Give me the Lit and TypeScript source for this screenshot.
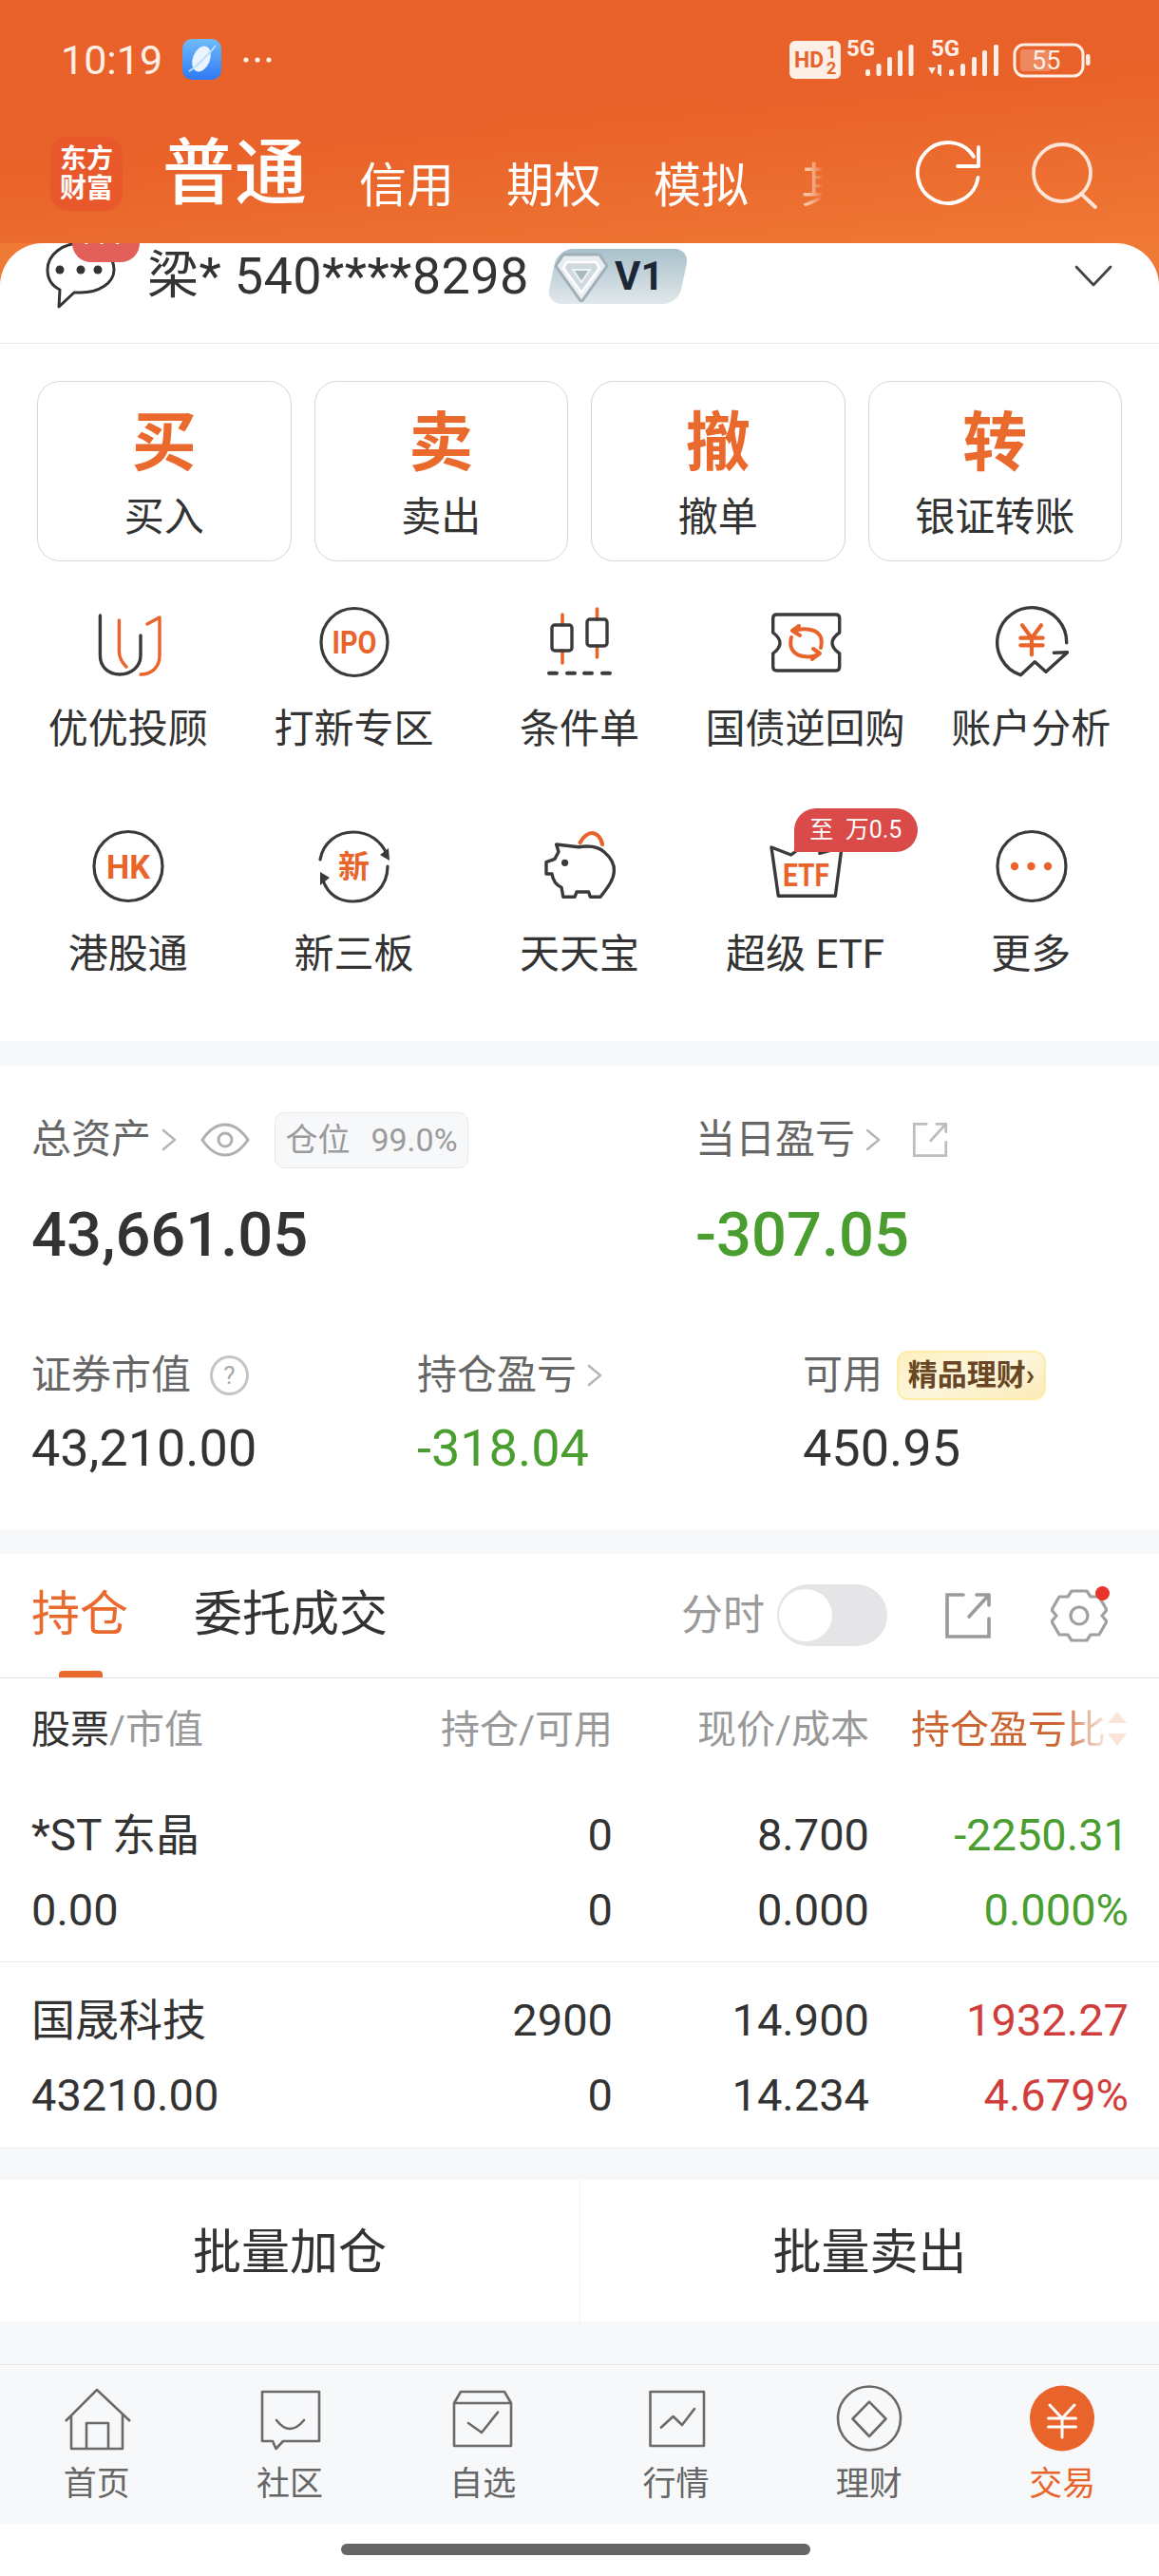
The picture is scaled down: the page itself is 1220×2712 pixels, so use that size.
import { LitElement, html, css } from "lit";
import { customElement } from "lit/decorators.js";

const D = "#3a3a3a";
const O = "#e9642b";

const gridIcons = [
  {
    label: "优优投顾",
    art: html`<svg class="ic" viewBox="0 0 80 80" fill="none" stroke-linecap="round" stroke-linejoin="round" stroke-width="3.4">
      <path stroke=${D} d="M10.4 12V54C10.4 66 19 74 31 74S53 66 53 54V33" />
      <path stroke=${O} d="M30.4 17V50C30.4 56 33 61 38 66" />
      <path stroke=${O} d="M60 21L73 14V54C73 66 65 74 53 74" />
    </svg>`,
  },
  {
    label: "打新专区",
    art: html`<svg class="ic" viewBox="0 0 80 80" fill="none">
      <ellipse cx="41" cy="40" rx="35" ry="35.5" stroke=${D} stroke-width="3.2" />
      <text x="17.5" y="52" class="ict" font-size="34" fill=${O} textLength="47" lengthAdjust="spacingAndGlyphs">IPO</text>
    </svg>`,
  },
  {
    label: "条件单",
    art: html`<svg class="ic" viewBox="0 0 80 80" fill="none" stroke-width="3.4" stroke-linecap="round" stroke-linejoin="round">
      <path stroke=${O} d="M22 11V22M22 49V62M58.5 5V16M58.5 44V56" stroke-width="3.6" />
      <rect x="11" y="22" width="21" height="27" rx="3" stroke=${D} />
      <rect x="48" y="16" width="21" height="28" rx="3" stroke=${D} />
      <path stroke=${D} d="M8 72.7H16M27 72.7H35M45 72.7H53M64 72.7H72" stroke-width="4" />
    </svg>`,
  },
  {
    label: "国债逆回购",
    art: html`<svg class="ic" viewBox="0 0 80 80" fill="none" stroke-width="3.4" stroke-linecap="round" stroke-linejoin="round">
      <path stroke=${D} d="M9.5 11H72Q75.7 11 75.7 15V30C70 34 68 38 68 41S70 48 75.7 52V66Q75.7 70 72 70H9.5Q5.7 70 5.7 66V52C11 48 13 44 13 41S11 34 5.7 30V15Q5.7 11 9.5 11Z" />
      <path stroke=${O} stroke-width="4" d="M28 29C34 25 50 25 55 33C58 38 57 42 56 46M33 23L26 28L34 33" />
      <path stroke=${O} stroke-width="4" d="M54 52C48 57 31 57 26 48C23 43 24 39 25 35M48 47L55 52L47 58" />
    </svg>`,
  },
  {
    label: "账户分析",
    art: html`<svg class="ic" viewBox="0 0 80 80" fill="none" stroke-width="3.4" stroke-linecap="round" stroke-linejoin="round">
      <path stroke=${D} d="M77.7 40.7A36.5 36.5 0 1 0 29.3 74.7L44.3 60.7L56 71.3L78.7 50.7L64.3 51.3" />
      <path stroke=${O} stroke-width="4.2" d="M31 22.3L41 35.7L51 22.3M29.3 35.7H52.7M29.3 43.3H52.7M41 35.7V53.3" />
    </svg>`,
  },
  {
    label: "港股通",
    art: html`<svg class="ic" viewBox="0 0 80 80" fill="none">
      <ellipse cx="40" cy="39" rx="36" ry="36.5" stroke=${D} stroke-width="3.2" />
      <text x="17" y="52" class="ict" font-size="35" fill=${O} textLength="46" lengthAdjust="spacingAndGlyphs">HK</text>
    </svg>`,
  },
  {
    label: "新三板",
    art: html`<svg class="ic" viewBox="0 0 80 80" fill="none" stroke-linecap="round" stroke-linejoin="round">
      <path stroke=${D} stroke-width="3.2" d="M5 32C8 14 23 3 40 3C56 3 69 12 75 26" />
      <path fill=${D} d="M77 20L78 33L68 27Z" />
      <path stroke=${D} stroke-width="3.2" d="M76 39C76 60 60 76 40 76C26 76 14 70 8 54" />
      <path fill=${D} d="M5 59L5 45L15 51Z" />
      <text x="24" y="51" class="ict" font-size="33" fill=${O}>新</text>
    </svg>`,
  },
  {
    label: "天天宝",
    art: html`<svg class="ic" viewBox="0 0 80 80" fill="none" stroke-width="3.4" stroke-linecap="round" stroke-linejoin="round">
      <path stroke=${O} stroke-width="4.2" d="M40.6 14C44 7 50 4 53 4C58 4 63 9 64 16" />
      <path stroke=${D} d="M15.6 16L38.9 18.7C50 17 60 18 66 24C73 30 77 36 76.4 44C76 54 69 62 62 71.3H51.4L49.6 66H37L35 71.3H22.8L21 61.3C16 59 12 54 11 47H5V34.7L14 31.3L18 23.7Z" />
      <circle cx="24.6" cy="35.3" r="3.6" fill=${D} stroke="none" />
    </svg>`,
  },
  {
    label: "超级 ETF",
    badge: true,
    art: html`<svg class="ic" viewBox="0 0 80 80" fill="none" stroke-width="3.4" stroke-linecap="round" stroke-linejoin="round">
      <path stroke=${D} d="M54.7 25.3L78 19L71.3 70.3H11.3L4 19L24.7 27L34 20" />
      <text x="16" y="60" class="ict" font-size="34" fill=${O} textLength="49" lengthAdjust="spacingAndGlyphs">ETF</text>
    </svg>`,
  },
  {
    label: "更多",
    art: html`<svg class="ic" viewBox="0 0 80 80" fill="none">
      <ellipse cx="41" cy="39" rx="36" ry="36.5" stroke=${D} stroke-width="3.2" />
      <circle cx="23" cy="39" r="4.2" fill=${O} /><circle cx="40.5" cy="39" r="4.2" fill=${O} /><circle cx="58" cy="39" r="4.2" fill=${O} />
    </svg>`,
  },
];

const G = "#6a6a6a";
const navTabs = [
  {
    label: "首页",
    art: html`<svg class="nic" viewBox="0 0 80 72" fill="none" stroke=${G} stroke-width="2.6" stroke-linejoin="round">
      <path d="M7 39L40 6L75 39M13 32V68H67V32M29 68V41H52V68" />
    </svg>`,
  },
  {
    label: "社区",
    art: html`<svg class="nic" viewBox="0 0 80 72" fill="none" stroke=${G} stroke-width="2.6" stroke-linejoin="round" stroke-linecap="round">
      <path d="M11 8H71V60H33L25.5 68L22 60H11Z" /><path d="M26 38Q40 56 55 38" />
    </svg>`,
  },
  {
    label: "自选",
    art: html`<svg class="nic" viewBox="0 0 80 72" fill="none" stroke=${G} stroke-width="2.6" stroke-linejoin="round" stroke-linecap="round">
      <path d="M10 20L17 8H63L70 20V65H10ZM10 20H70" /><path d="M25 41L39 51L56 29.6" />
    </svg>`,
  },
  {
    label: "行情",
    art: html`<svg class="nic" viewBox="0 0 80 72" fill="none" stroke=${G} stroke-width="2.6" stroke-linejoin="round" stroke-linecap="round">
      <rect x="12.5" y="8" width="56.5" height="57" /><path d="M24 45.5L36.6 34L46 43L59 26" />
    </svg>`,
  },
  {
    label: "理财",
    art: html`<svg class="nic" viewBox="0 0 80 72" fill="none" stroke=${G} stroke-width="2.6" stroke-linejoin="round">
      <ellipse cx="40" cy="36" rx="33" ry="33.5" /><path d="M40 18.6L57.5 36.5L40 55L22.5 36.5Z" />
    </svg>`,
  },
  {
    label: "交易",
    active: true,
    art: html`<svg class="nic" viewBox="0 0 80 72" fill="none">
      <ellipse cx="40" cy="36" rx="34" ry="34.5" fill=${O} />
      <path stroke="#fff" stroke-width="3" stroke-linecap="round" stroke-linejoin="round" d="M27 22L40 36L53 22M25.5 36H54.5M25.5 45H54.5M40 36V56" />
    </svg>`,
  },
];

const chevron = html`<svg class="chev" viewBox="0 0 18 24" fill="none" stroke="#b5b5b5" stroke-width="2.4" stroke-linecap="round" stroke-linejoin="round"><path d="M3 2L15 12L3 22" /></svg>`;
const linkIcon = (cls: string, color: string) => html`<svg class=${cls} viewBox="0 0 50 50" fill="none" stroke=${color} stroke-width="3.6" stroke-linecap="round"><path d="M20 3H3V47H47V28" /><path d="M26 26L47 3M34 3H47V14" stroke-linejoin="round" /></svg>`;

@customElement("app-root")
export class AppRoot extends LitElement {
  static styles = css`
    :host {
      display: block;
      width: 1220px;
      height: 2712px;
      background: #fff;
      overflow: hidden;
      font-family: Roboto, "Noto Sans CJK SC", sans-serif;
      color: #333;
    }
    .ict { font-weight: 700; font-family: Roboto, "Noto Sans CJK SC", sans-serif; }
    .top {
      background: #ef7a35 linear-gradient(175deg, #e9612a 0%, #e9622a 50%, #ef7935 100%) no-repeat;
      background-size: 100% 256px;
    }
    .status {
      height: 46px;
      padding: 40px 70px 0 64px;
      display: flex;
      align-items: center;
      color: #fdeee6;
    }
    .time { font-size: 43px; line-height: 46px; width: 128px; }
    .appdot { width: 42px; height: 44px; }
    .dots { width: 34px; height: 10px; margin-left: 21px; }
    .sysicons { width: 319px; height: 46px; margin-left: auto; overflow: visible; }
    .sysicons text { font-family: Roboto, sans-serif; }
    .nav {
      display: flex;
      align-items: center;
      height: 78px;
      padding: 58px 62px 34px 53px;
      color: #fff;
    }
    .logo {
      width: 76px;
      height: 78px;
      border-radius: 18px;
      background: #e9582a;
      color: #fff;
      font-size: 28px;
      line-height: 31px;
      font-weight: 700;
      text-align: center;
      display: flex;
      align-items: center;
      justify-content: center;
    }
    .acct { flex: 1; display: flex; align-items: flex-end; height: 78px; margin-left: 42px; min-width: 0; }
    .acct .main { font-size: 76px; line-height: 84px; font-weight: 500; margin-right: 55px; margin-bottom: -3px; width: 152px; white-space: nowrap; }
    .acct .t { font-size: 50px; line-height: 60px; margin-right: 55px; margin-bottom: -4px; white-space: nowrap; }
    .acct .more { width: 28px; overflow: hidden; color: #f8c3a4; margin-right: 0; -webkit-mask-image: linear-gradient(to right, #000 30%, transparent 85%); mask-image: linear-gradient(to right, #000 30%, transparent 85%); }
    .navic { width: 80px; height: 80px; flex: none; margin-top: 8px; }
    .navic.search { margin-left: 41px; }
    .account {
      height: 105px;
      background: #fff;
      border-radius: 45px 45px 0 0;
      border-bottom: 1px solid #ececec;
      display: flex;
      align-items: center;
      padding: 0 49px 0 46px;
      position: relative;
      overflow: hidden;
      box-sizing: content-box;
    }
    .chatwrap { width: 80px; height: 105px; flex: none; position: relative; }
    .chat { width: 80px; height: 72px; overflow: hidden; display: block; }
    .chatbadge {
      position: absolute;
      left: 30px;
      top: -30px;
      width: 71px;
      height: 50px;
      border-radius: 0 0 20px 20px;
      background: #e25f5a;
      color: #fff;
      font-size: 28px;
      line-height: 30px;
      font-style: italic;
      text-align: center;
      overflow: hidden;
      display: flex;
      align-items: flex-end;
      justify-content: center;
      padding-bottom: 13px;
      box-sizing: border-box;
      letter-spacing: 1px;
    }
    .uname { font-size: 54px; line-height: 60px; margin-left: 29px; margin-bottom: 36px; letter-spacing: 0.4px; white-space: nowrap; width: 422px; flex: none; color: #333; }
    .v1 {
      width: 147px;
      height: 58px;
      margin-bottom: 36px;
      margin-left: 0;
      display: flex;
      align-items: center;
      position: relative;
      flex: none;
    }
    .v1bg {
      position: absolute;
      inset: 0 4px;
      transform: skewX(-12deg);
      border-radius: 16px;
      background: linear-gradient(180deg, #a9c0cb 0%, #e1e8eb 100%);
    }
    .dia { width: 58px; height: 54px; position: relative; margin-left: 6px; flex: none; }
    .v1 b { position: relative; font-size: 42px; line-height: 50px; margin-left: 6px; color: #1c2735; }
    .acctchev { width: 40px; height: 24px; margin-left: auto; margin-bottom: 36px; flex: none; }

    .trade {
      display: grid;
      grid-template-columns: repeat(4, 1fr);
      gap: 24px;
      padding: 39px 39px 0;
      height: 190px;
    }
    .tcard {
      border: 1.5px solid #d6d6d6;
      border-radius: 24px;
      display: flex;
      flex-direction: column;
      align-items: center;
      box-sizing: border-box;
      height: 190px;
      padding-top: 29px;
    }
    .tcard .big { font-size: 68px; line-height: 72px; font-weight: 700; color: #ea6a2e; }
    .tcard .sm { font-size: 42px; line-height: 44px; margin-top: 20px; color: #333; }
    .grid {
      display: grid;
      grid-template-columns: repeat(5, 1fr);
      grid-template-rows: 237px 223px;
      padding: 45px 16px 0;
    }
    .cell { display: flex; flex-direction: column; align-items: center; position: relative; }
    .ic { width: 80px; height: 80px; display: block; flex: none; }
    .cell .lb { font-size: 42px; line-height: 44px; margin-top: 30px; white-space: nowrap; color: #333; }
    .badge {
      position: absolute;
      left: 107px;
      top: -22px;
      width: 130px;
      height: 46px;
      background: #d94a48;
      border-radius: 23px 23px 23px 0;
      color: #fff;
      font-size: 25px;
      line-height: 46px;
      text-align: center;
      white-space: nowrap;
    }
    .sep { height: 26px; background: #f7f8fa; }
    .stats { height: 488px; padding: 56px 0 0 33px; box-sizing: border-box; }
    .rowa { display: grid; grid-template-columns: 699px 1fr; }
    .rowb { display: grid; grid-template-columns: 406px 406px 1fr; margin-top: 84px; }
    .lbl { display: flex; align-items: center; height: 44px; font-size: 42px; line-height: 44px; color: #666; white-space: nowrap; }
    .rowb .lbl { height: 52px; }
    .chev { width: 18px; height: 24px; margin-left: 10px; flex: none; }
    .eye { width: 52px; height: 36px; margin-left: 24px; flex: none; }
    .pill {
      height: 59px;
      width: 204px;
      margin-left: 26px;
      border: 1.5px solid #e8e8ea;
      border-radius: 10px;
      background: #f7f8fa;
      color: #9a9a9a;
      font-size: 34px;
      display: flex;
      align-items: center;
      justify-content: center;
      gap: 22px;
      box-sizing: border-box;
      flex: none;
    }
    .link { width: 38px; height: 38px; margin-left: 32px; flex: none; }
    .qm {
      border: 3px solid #c4c4c4;
      border-radius: 50%;
      margin-left: 20px;
      color: #a8a8a8;
      font-size: 26px;
      text-align: center;
      box-sizing: content-box;
      flex: none;
      width: 35px;
      height: 36px;
      line-height: 36px;
    }
    .gold {
      margin-left: 15px;
      width: 157px;
      height: 52px;
      border-radius: 12px;
      background: linear-gradient(160deg, #fdf0c0 0%, #fdf6dd 50%, #fbeab4 100%);
      border: 2px solid #fbeea8;
      box-sizing: border-box;
      color: #6a4724;
      font-size: 31px;
      font-weight: 700;
      line-height: 48px;
      text-align: center;
      white-space: nowrap;
      flex: none;
      overflow: hidden;
    }
    .vbig { font-size: 65px; line-height: 76px; font-weight: 500; margin-top: 40px; color: #333; }
    .vmid { font-size: 54px; line-height: 64px; margin-top: 19px; color: #333; }
    .green, .vbig.green, .vmid.green { color: #4a9e2f; }
    .red { color: #d03e3b; }
    .tabs {
      display: flex;
      height: 131px;
      box-sizing: border-box;
      padding: 34px 54px 0 33px;
      border-bottom: 1.5px solid #e4e4e4;
      align-items: flex-start;
    }
    .tabon { width: 102px; margin-right: 69px; display: flex; flex-direction: column; font-size: 51px; line-height: 60px; color: #ea6a2e; }
    .tabon i { display: block; width: 46px; height: 7px; border-radius: 4px 4px 0 0; background: #ea6a2e; margin: 29px 0 0 29px; }
    .taboff { font-size: 51px; line-height: 60px; color: #333; white-space: nowrap; }
    .tools { margin-left: auto; display: flex; align-items: center; height: 65px; margin-top: -2px; }
    .fs { font-size: 44px; line-height: 50px; color: #9a9a9a; white-space: nowrap; }
    .toggle { width: 116px; height: 65px; background: #e5e5e7; border-radius: 33px; margin-left: 13px; padding: 5px 0 5px 2px; box-sizing: border-box; }
    .toggle i { display: block; width: 56px; height: 55px; border-radius: 50%; background: #fff; }
    .share { width: 50px; height: 50px; margin-left: 60px; }
    .gearwrap { margin-left: 62px; width: 60px; height: 60px; position: relative; flex: none; }
    .gear { width: 60px; height: 60px; display: block; }
    .reddot { position: absolute; right: -2px; top: -1px; width: 15px; height: 15px; border-radius: 50%; background: #e8352a; }
    .tbl { display: grid; grid-template-columns: 367px 245px 270px 273px; padding: 0 32px 0 33px; align-items: center; }
    .thead { height: 98px; font-size: 41px; line-height: 50px; padding-top: 0; color: #999; align-items: start; }
    .thead > div { padding-top: 29px; white-space: nowrap; }
    .thead .k { color: #333; }
    .r { text-align: right; }
    .sortcol { display: flex; justify-content: flex-end; align-items: flex-start; }
    .sortname { color: #cc6431; -webkit-mask-image: linear-gradient(to right, #000 75%, rgba(0,0,0,.15) 100%); mask-image: linear-gradient(to right, #000 75%, rgba(0,0,0,.15) 100%); }
    .sort { width: 24px; height: 40px; margin-top: 4px; flex: none; }
    .row { height: 196px; border-bottom: 1.5px solid #ececec; padding: 22px 32px 0 33px; box-sizing: border-box; grid-template-rows: 78px 79px; align-items: center; }
    .row1 { height: 201px; padding-top: 28px; }
    .row div { font-size: 47px; line-height: 54px; }
    .row .nm { font-size: 46px; line-height: 54px; white-space: nowrap; }
    .sep2 { height: 33px; background: #f7f8fa; }
    .batch { display: grid; grid-template-columns: 1fr 1fr; height: 149px; }
    .batch div { display: flex; align-items: center; justify-content: center; font-size: 51px; color: #333; padding-bottom: 5px; box-sizing: border-box; }
    .batch div + div { border-left: 1.5px solid #f2f2f2; }
    .sep3 { height: 45px; background: #f7f8fa; }
    .tabbar { display: grid; grid-template-columns: repeat(6, 203.3px); height: 168px; background: #f7f8fa; border-top: 1.5px solid #e6e6e6; box-sizing: border-box; }
    .ntab { display: flex; flex-direction: column; align-items: center; padding-top: 20px; font-size: 35px; line-height: 40px; color: #666; }
    .ntab.on { color: #e9642b; }
    .nic { width: 80px; height: 72px; display: block; flex: none; }
    .ntab span { margin-top: 14px; }
    .home { height: 54px; display: flex; justify-content: center; padding: 21px 8px 0 0; box-sizing: border-box; }
    .home i { display: block; width: 494px; height: 12px; border-radius: 6px; background: #666; }
  `;

  render() {
    return html`
      <div class="top">
        <div class="status">
          <div class="time">10:19</div>
          <svg class="appdot" viewBox="0 0 42 44">
            <defs><linearGradient id="bl" x1="0" y1="0" x2="0" y2="1"><stop offset="0" stop-color="#6fbcfb" /><stop offset="1" stop-color="#2e79f5" /></linearGradient></defs>
            <rect width="41" height="43" rx="10" fill="url(#bl)" />
            <ellipse cx="20" cy="21" rx="9" ry="14" transform="rotate(22 20 21)" fill="#eaf4fe" />
            <path d="M7 34C14 30 28 16 35 7" stroke="#bfdcfb" stroke-width="2" fill="none" />
          </svg>
          <svg class="dots" viewBox="0 0 34 10" fill="#fdeee6"><circle cx="4" cy="5" r="2.6" /><circle cx="16" cy="5" r="2.6" /><circle cx="28" cy="5" r="2.6" /></svg>
          <svg class="sysicons" viewBox="0 0 319 46" fill="#fdeee6">
            <rect x="0" y="3" width="54" height="40" rx="6" />
            <text x="5" y="31" font-size="24" font-weight="700" fill="#e9622a" textLength="31" lengthAdjust="spacingAndGlyphs">HD</text>
            <text x="39" y="21" font-size="18" font-weight="700" fill="#e9622a">1</text>
            <text x="39" y="38" font-size="18" font-weight="700" fill="#e9622a">2</text>
            <text x="60" y="19" font-size="24" font-weight="700">5G</text>
            <rect x="80" y="33" width="5" height="7" rx="2" /><rect x="91.5" y="27" width="5" height="13" rx="2" /><rect x="103" y="20" width="5" height="20" rx="2" /><rect x="114" y="13" width="5" height="27" rx="2" /><rect x="125.5" y="7" width="5" height="33" rx="2" />
            <text x="149" y="19" font-size="24" font-weight="700">5G</text>
            <path d="M146 31H154L150 38ZM156 38V28H158V38ZM160 28L160 40H158V28Z" />
            <rect x="168" y="33" width="5" height="7" rx="2" /><rect x="180" y="27" width="5" height="13" rx="2" /><rect x="192" y="20" width="5" height="20" rx="2" /><rect x="203" y="13" width="5" height="27" rx="2" /><rect x="215" y="7" width="5" height="33" rx="2" />
            <rect x="237" y="7" width="72" height="33" rx="10" fill="none" stroke="#fdeee6" stroke-width="3" />
            <rect x="243" y="12" width="32" height="23" rx="3" fill="#fff" fill-opacity=".25" />
            <text x="255" y="33" font-size="27">55</text>
            <rect x="312" y="17" width="4.5" height="12" rx="2" />
          </svg>
        </div>
        <div class="nav">
          <div class="logo"><span>东方<br />财富</span></div>
          <div class="acct">
            <div class="main">普通</div>
            <div class="t">信用</div>
            <div class="t">期权</div>
            <div class="t">模拟</div>
            <div class="t more">其</div>
          </div>
          <svg class="navic" viewBox="0 0 80 80" fill="none" stroke="#fff" stroke-width="3.8" stroke-linecap="round" stroke-linejoin="round">
            <path d="M68 18A32 32 0 1 0 72.5 40" /><path d="M51 28H73V8" />
          </svg>
          <svg class="navic search" viewBox="0 0 80 80" fill="none" stroke="#fde4d6" stroke-width="3.8" stroke-linecap="round">
            <circle cx="40" cy="35" r="30" /><path d="M60 57L75 71" />
          </svg>
        </div>
        <div class="account">
          <div class="chatwrap">
            <svg class="chat" viewBox="0 0 80 72" fill="none" stroke="#333" stroke-width="3" stroke-linejoin="round">
              <path d="M39 0C20 0 4 12 4 28C4 38 9 45 17 49L16 67L32 52C34 52 37 52 39 52C58 52 74 42 74 28C74 12 58 0 39 0Z" />
              <circle cx="17" cy="28" r="4.5" fill="#333" stroke="none" /><circle cx="39" cy="28" r="4.5" fill="#333" stroke="none" /><circle cx="57" cy="28" r="4.5" fill="#333" stroke="none" />
            </svg>
            <div class="chatbadge">777</div>
          </div>
          <div class="uname">梁* 540****8298</div>
          <div class="v1">
            <div class="v1bg"></div>
            <svg class="dia" viewBox="0 0 58 54" fill="none" stroke-linejoin="round">
              <path d="M10 4H48L56 16L29 54L2 16Z" fill="#e8eef1" stroke="#9fb0b8" stroke-width="3" />
              <path d="M14 12H44L48 18L29 44L10 18Z" fill="#cfd9de" stroke="#fff" stroke-width="2.5" />
              <path d="M20 20H38L29 33Z" fill="#aab9c1" stroke="#eef3f5" stroke-width="2" />
            </svg>
            <b>V1</b>
          </div>
          <svg class="acctchev" viewBox="0 0 40 24" fill="none" stroke="#444" stroke-width="2.8" stroke-linecap="round" stroke-linejoin="round"><path d="M2 2L20 21L38 2" /></svg>
        </div>
      </div>

      <div class="trade">
        ${[["买", "买入"], ["卖", "卖出"], ["撤", "撤单"], ["转", "银证转账"]].map(
          ([b, s]) => html`<div class="tcard"><div class="big">${b}</div><div class="sm">${s}</div></div>`
        )}
      </div>

      <div class="grid">
        ${gridIcons.map(
          (g) => html`<div class="cell">
            ${g.art}
            <div class="lb">${g.label}</div>
            ${g.badge ? html`<div class="badge">至&nbsp;&nbsp;万0.5</div>` : ""}
          </div>`
        )}
      </div>

      <div class="sep"></div>

      <div class="stats">
        <div class="rowa">
          <div>
            <div class="lbl">总资产${chevron}
              <svg class="eye" viewBox="0 0 52 36" fill="none" stroke="#b0b0b0" stroke-width="3"><path d="M2 18C10 6 18 2 26 2S42 6 50 18C42 30 34 34 26 34S10 30 2 18Z" /><circle cx="26" cy="18" r="7" /></svg>
              <div class="pill"><span>仓位</span><span>99.0%</span></div>
            </div>
            <div class="vbig">43,661.05</div>
          </div>
          <div>
            <div class="lbl">当日盈亏${chevron}${linkIcon("link", "#bdbdbd")}</div>
            <div class="vbig green">-307.05</div>
          </div>
        </div>
        <div class="rowb">
          <div>
            <div class="lbl">证券市值<div class="qm">?</div></div>
            <div class="vmid">43,210.00</div>
          </div>
          <div>
            <div class="lbl">持仓盈亏${chevron}</div>
            <div class="vmid green">-318.04</div>
          </div>
          <div>
            <div class="lbl">可用<div class="gold">精品理财›</div></div>
            <div class="vmid">450.95</div>
          </div>
        </div>
      </div>

      <div class="sep"></div>

      <div class="tabs">
        <div class="tabon">持仓<i></i></div>
        <div class="taboff">委托成交</div>
        <div class="tools">
          <div class="fs">分时</div>
          <div class="toggle"><i></i></div>
          ${linkIcon("share", "#9a9a9a")}
          <div class="gearwrap">
            <svg class="gear" viewBox="0 0 60 60" fill="none" stroke="#a0a0a0" stroke-width="3.2" stroke-linejoin="round">
              <path d="M22 4H38L42 10L51 10L59 24L54 30L59 36L51 50L42 50L38 56H22L18 50L9 50L1 36L6 30L1 24L9 10L18 10Z" />
              <circle cx="30" cy="30" r="9" />
            </svg>
            <div class="reddot"></div>
          </div>
        </div>
      </div>

      <div class="tbl thead">
        <div><span class="k">股票</span>/市值</div>
        <div class="r">持仓/可用</div>
        <div class="r">现价/成本</div>
        <div class="sortcol">
          <span class="sortname">持仓盈亏比</span>
          <svg class="sort" viewBox="0 0 24 40" fill="#fbe5d8"><path d="M12 2L22 14H2Z" /><path d="M12 38L22 25H2Z" /></svg>
        </div>
      </div>

      <div class="tbl row row1">
        <div class="nm">*ST 东晶</div><div class="r">0</div><div class="r">8.700</div><div class="r green">-2250.31</div>
        <div>0.00</div><div class="r">0</div><div class="r">0.000</div><div class="r green">0.000%</div>
      </div>
      <div class="tbl row">
        <div class="nm">国晟科技</div><div class="r">2900</div><div class="r">14.900</div><div class="r red">1932.27</div>
        <div>43210.00</div><div class="r">0</div><div class="r">14.234</div><div class="r red">4.679%</div>
      </div>

      <div class="sep2"></div>
      <div class="batch"><div>批量加仓</div><div>批量卖出</div></div>
      <div class="sep3"></div>

      <div class="tabbar">
        ${navTabs.map(
          (t) => html`<div class="ntab ${t.active ? "on" : ""}">${t.art}<span>${t.label}</span></div>`
        )}
      </div>
      <div class="home"><i></i></div>
    `;
  }
}
